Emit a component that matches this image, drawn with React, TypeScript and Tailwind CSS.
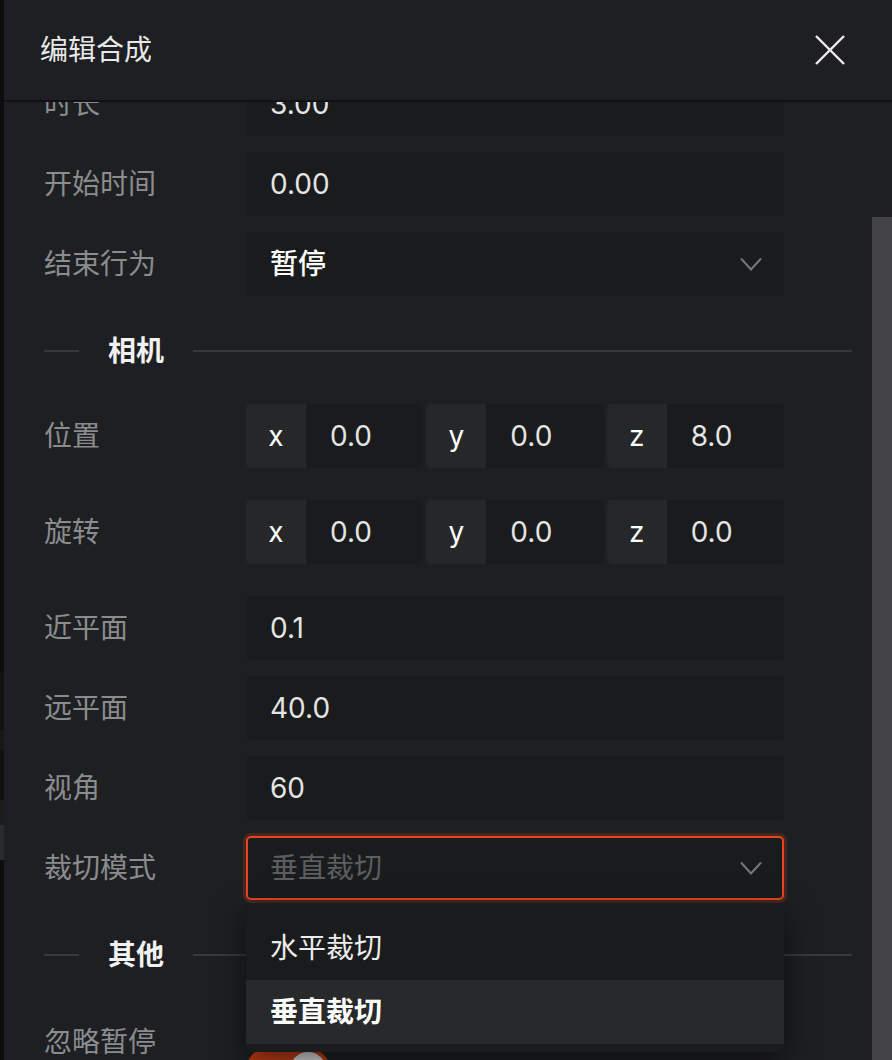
import React from 'react';

// Edit composition panel, dark theme, camera section with an open select.

const FONT = { fontFamily: 'Inter, "Noto Sans CJK SC", sans-serif' };

const Chevron = () => (
  <svg width="22" height="14" viewBox="0 0 22 14" fill="none">
    <polyline points="1,1.5 11,12.5 21,1.5" stroke="#76777a" strokeWidth="2" />
  </svg>
);

const Row: React.FC<{ label: string; wide?: boolean; children: React.ReactNode }> = ({
  label,
  wide,
  children,
}) => (
  <div className={`flex items-center ${wide ? 'mb-8' : 'mb-4'}`}>
    <div className="w-[202px] shrink-0 text-[28px] text-[#8b8c8e]">{label}</div>
    <div className="w-[538px] shrink-0">{children}</div>
  </div>
);

const TextBox: React.FC<{ value: string }> = ({ value }) => (
  <div className="h-16 rounded-[5px] bg-[#1a1b1d] px-6 flex items-center text-[28px] text-[#e4e4e4]">
    {value}
  </div>
);

const Vec3: React.FC<{ values: [string, string, string] }> = ({ values }) => (
  <div className="grid grid-cols-3 gap-[3px]">
    {(['x', 'y', 'z'] as const).map((axis, i) => (
      <div key={axis} className="h-16 flex rounded-[5px] overflow-hidden">
        <div className="w-[60px] shrink-0 bg-[#262729] flex items-center justify-center text-[28px] text-white">
          {axis}
        </div>
        <div className="flex-1 bg-[#1a1b1d] pl-6 flex items-center text-[28px] text-[#e4e4e4]">
          {values[i]}
        </div>
      </div>
    ))}
  </div>
);

const Divider: React.FC<{ title: string }> = ({ title }) => (
  <div className="mt-8 mb-[30px] h-[46px] flex items-center pr-5">
    <div className="w-[35px] h-[2px] bg-[#38393c]" />
    <div className="px-[29px] text-[28px] font-semibold text-[#f2f2f2]">{title}</div>
    <div className="flex-1 h-[2px] bg-[#38393c]" />
  </div>
);

export default function App() {
  return (
    <div className="w-[892px] h-[1060px] flex bg-[#1e1f22] overflow-hidden" style={FONT}>
      {/* underlying page edge */}
      <div className="w-1 shrink-0 flex flex-col bg-[#0d0d0e]">
        <div className="h-[672px]" />
        <div className="h-[58px] bg-[#121213]" />
        <div className="h-[20px] bg-[#181819]" />
        <div className="h-[50px] bg-[#111112]" />
        <div className="h-[25px] bg-[#1c1c1d]" />
        <div className="h-[35px] bg-[#2a2b2d]" />
      </div>

      <div className="flex-1 flex flex-col min-w-0">
        {/* header */}
        <div className="h-[102px] shrink-0 flex items-center justify-between pl-9 pr-[47px] border-b-2 border-[#111214]">
          <div className="text-[28px] text-[#e8e8e8]">编辑合成</div>
          <svg width="30" height="30" viewBox="0 0 30 30">
            <line x1="1" y1="1" x2="29" y2="29" stroke="#ececec" strokeWidth="2.4" />
            <line x1="29" y1="1" x2="1" y2="29" stroke="#ececec" strokeWidth="2.4" />
          </svg>
        </div>

        {/* scroll area */}
        <div className="flex-1 flex min-h-0">
          <div className="flex-1 overflow-hidden">
            <div className="-mt-[30px] pl-10">
              <Row label="时长">
                <TextBox value="3.00" />
              </Row>
              <Row label="开始时间">
                <TextBox value="0.00" />
              </Row>
              <div className="flex items-center">
                <div className="w-[202px] shrink-0 text-[28px] text-[#8b8c8e]">结束行为</div>
                <div className="w-[538px] h-16 rounded-[5px] bg-[#1a1b1d] pl-6 pr-[22px] flex items-center justify-between">
                  <span className="text-[28px] text-white font-medium">暂停</span>
                  <Chevron />
                </div>
              </div>

              <Divider title="相机" />

              <Row label="位置" wide>
                <Vec3 values={['0.0', '0.0', '8.0']} />
              </Row>
              <Row label="旋转" wide>
                <Vec3 values={['0.0', '0.0', '0.0']} />
              </Row>
              <Row label="近平面">
                <TextBox value="0.1" />
              </Row>
              <Row label="远平面">
                <TextBox value="40.0" />
              </Row>
              <Row label="视角">
                <TextBox value="60" />
              </Row>

              <div className="flex items-center">
                <div className="w-[202px] shrink-0 text-[28px] text-[#8b8c8e]">裁切模式</div>
                <div className="relative w-[538px] z-10">
                  <div className="h-16 rounded-[5px] bg-[#1a1b1d] border-2 border-[#e5461d] shadow-[0_0_0_3px_rgba(229,70,29,0.22)] pl-[22px] pr-5 flex items-center justify-between">
                    <span className="text-[28px] text-[#5d5e60]">垂直裁切</span>
                    <Chevron />
                  </div>
                  <div className="absolute left-0 right-0 top-full mt-1 bg-[#1a1b1d] rounded-b-[6px] pt-3 pb-2 shadow-[0_10px_30px_rgba(0,0,0,0.55)]">
                    <div className="h-16 pl-6 flex items-center text-[28px] text-[#ededed]">水平裁切</div>
                    <div className="h-16 pl-6 flex items-center text-[28px] font-semibold text-white bg-[#28292b]">
                      垂直裁切
                    </div>
                  </div>
                </div>
              </div>

              <Divider title="其他" />

              <div className="flex items-start mt-[44px]">
                <div className="w-[202px] shrink-0 text-[28px] leading-10 text-[#8b8c8e]">忽略暂停</div>
                <div className="mt-[26px] w-[84px] h-[44px] rounded-full bg-[#c23d17] p-1 flex justify-end">
                  <div className="w-9 h-9 rounded-full bg-[#dcdcdc]" />
                </div>
              </div>
            </div>
          </div>

          {/* scrollbar */}
          <div className="w-5 shrink-0 flex flex-col">
            <div className="h-[115px]" />
            <div className="flex-1 bg-[#444446]" />
          </div>
        </div>
      </div>
    </div>
  );
}
